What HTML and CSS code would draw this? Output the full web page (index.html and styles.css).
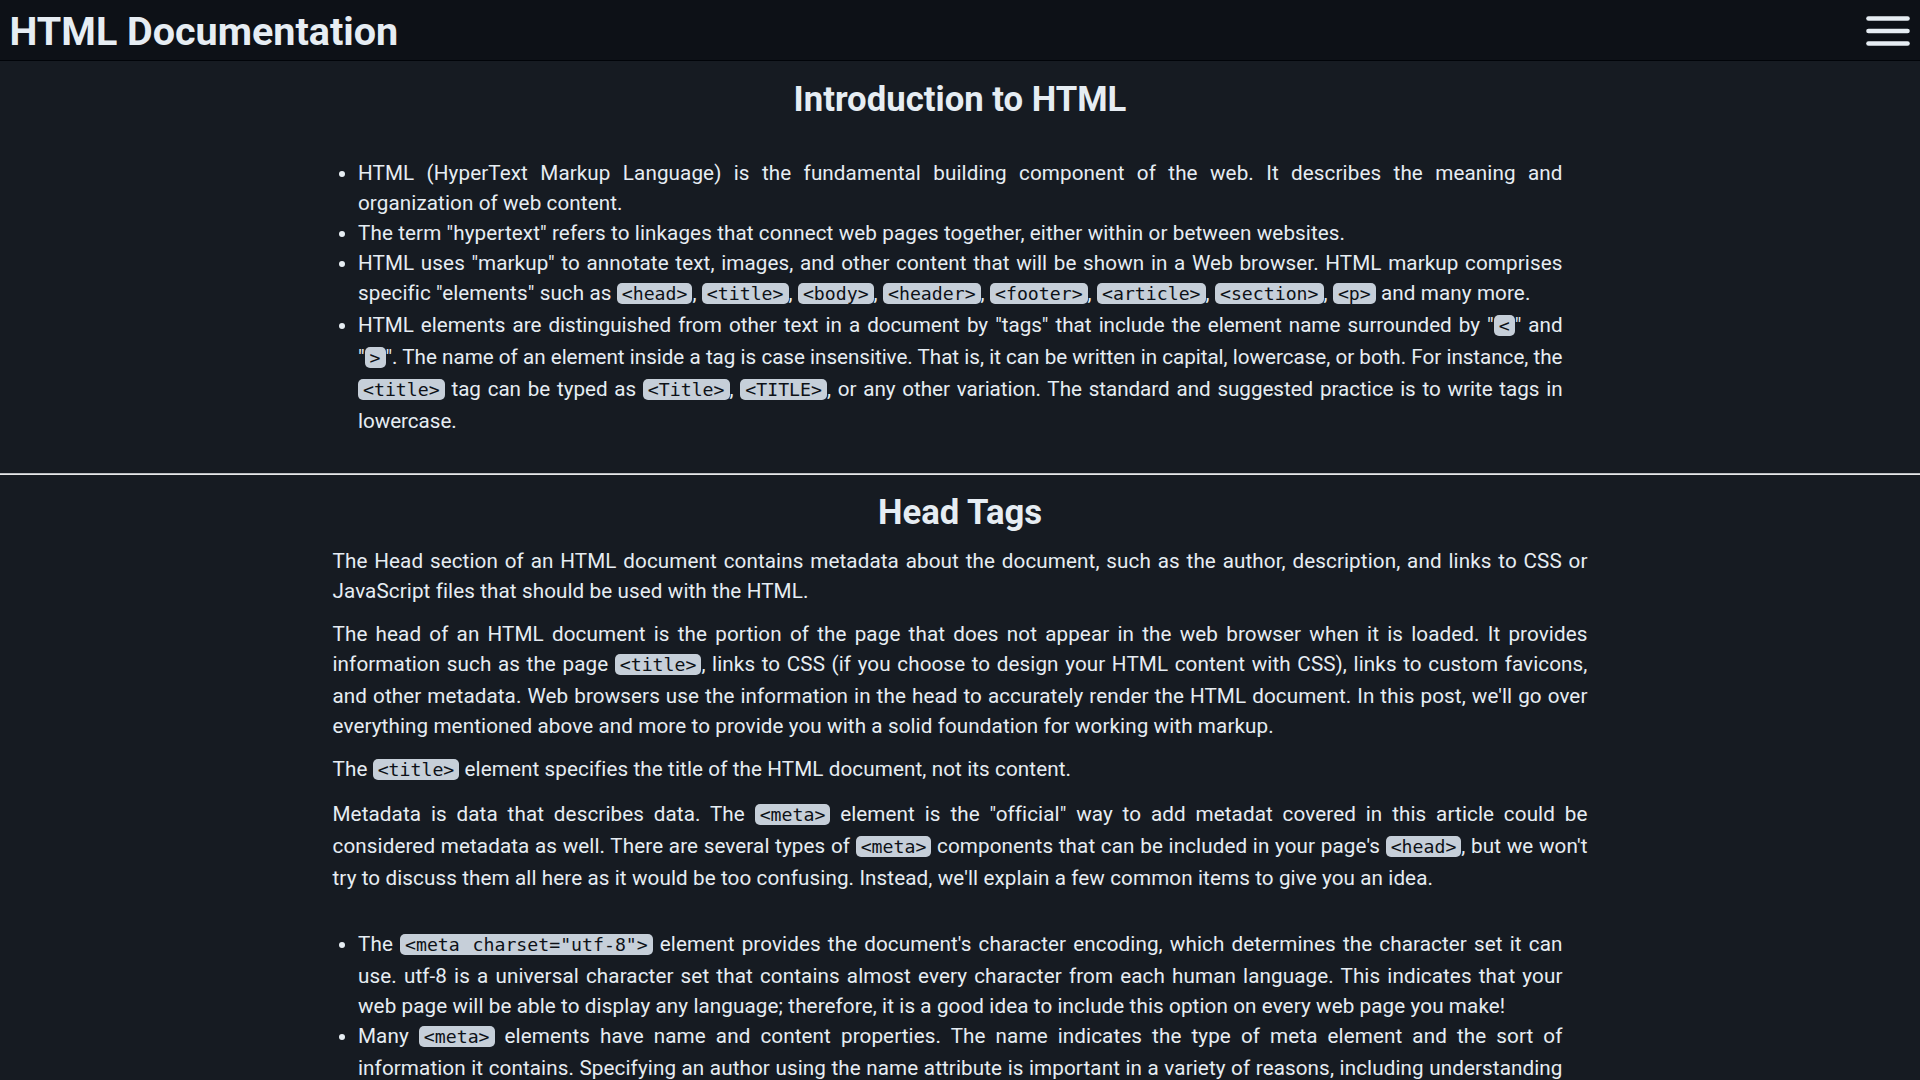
FILE: index.html
```html
<!DOCTYPE html>
<html lang="en">
<head>
<meta charset="utf-8">
<title>HTML Documentation</title>
<link rel="stylesheet" href="styles.css">
</head>
<body>
<header class="topbar">
  <div class="brand">HTML Documentation</div>
  <button class="menu-btn" aria-label="Menu">
    <svg class="menu-icon" width="44" height="30" viewBox="0 0 44 30">
      <line x1="2.5" y1="2.5" x2="41.5" y2="2.5"/>
      <line x1="2.5" y1="15" x2="41.5" y2="15"/>
      <line x1="2.5" y1="27.5" x2="41.5" y2="27.5"/>
    </svg>
  </button>
</header>
<main class="content">
  <section class="doc-section intro">
    <h2 class="section-title">Introduction to HTML</h2>
    <ul class="doc-list">
      <li>HTML (HyperText Markup Language) is the fundamental building component of the web. It describes the meaning and organization of web content.</li>
      <li>The term "hypertext" refers to linkages that connect web pages together, either within or between websites.</li>
      <li>HTML uses "markup" to annotate text, images, and other content that will be shown in a Web browser. HTML markup comprises specific "elements" such as <code>&lt;head&gt;</code>, <code>&lt;title&gt;</code>, <code>&lt;body&gt;</code>, <code>&lt;header&gt;</code>, <code>&lt;footer&gt;</code>, <code>&lt;article&gt;</code>, <code>&lt;section&gt;</code>, <code>&lt;p&gt;</code> and many more.</li>
      <li class="tight">HTML elements are distinguished from other text in a document by "tags" that include the element name surrounded by "<code>&lt;</code>" and "<code>&gt;</code>". The name of an element inside a tag is case insensitive. That is, it can be written in capital, lowercase, or both. For instance, the <code>&lt;title&gt;</code> tag can be typed as <code>&lt;Title&gt;</code>, <code>&lt;TITLE&gt;</code>, or any other variation. The standard and suggested practice is to write tags in lowercase.</li>
    </ul>
  </section>
  <hr class="divider">
  <section class="doc-section head-tags">
    <h2 class="section-title">Head Tags</h2>
    <p>The Head section of an HTML document contains metadata about the document, such as the author, description, and links to CSS or JavaScript files that should be used with the HTML.</p>
    <p>The head of an HTML document is the portion of the page that does not appear in the web browser when it is loaded. It provides information such as the page <code>&lt;title&gt;</code>, links to CSS (if you choose to design your HTML content with CSS), links to custom favicons, and other metadata. Web browsers use the information in the head to accurately render the HTML document. In this post, we'll go over everything mentioned above and more to provide you with a solid foundation for working with markup.</p>
    <p>The <code>&lt;title&gt;</code> element specifies the title of the HTML document, not its content.</p>
    <p>Metadata is data that describes data. The <code>&lt;meta&gt;</code> element is the "official" way to add metadat covered in this article could be considered metadata as well. There are several types of <code>&lt;meta&gt;</code> components that can be included in your page's <code>&lt;head&gt;</code>, but we won't try to discuss them all here as it would be too confusing. Instead, we'll explain a few common items to give you an idea.</p>
    <ul class="doc-list spaced">
      <li>The <code>&lt;meta charset="utf-8"&gt;</code> element provides the document's character encoding, which determines the character set it can use. utf-8 is a universal character set that contains almost every character from each human language. This indicates that your web page will be able to display any language; therefore, it is a good idea to include this option on every web page you make!</li>
      <li>Many <code>&lt;meta&gt;</code> elements have name and content properties. The name indicates the type of meta element and the sort of information it contains. Specifying an author using the name attribute is important in a variety of reasons, including understanding who wrote the page and whom to contact about it.</li>
    </ul>
  </section>
</main>
</body>
</html>
```
FILE: styles.css
```css
html, body {
  margin: 0;
  padding: 0;
}

body {
  background: #161b22;
  color: #e6edf3;
  font-family: Roboto, "Liberation Sans", sans-serif;
  font-size: 20.65px;
  line-height: 30px;
  letter-spacing: 0.1px;
}

.topbar {
  height: 61px;
  box-sizing: border-box;
  background: #0d1117;
  border-bottom: 1px solid #010409;
  padding: 0 10px 0 9.5px;
  display: flex;
  align-items: center;
  justify-content: space-between;
}

.brand {
  font-size: 39.5px;
  font-weight: 700;
  line-height: 57px;
  padding-top: 3px;
  color: #e6edf3;
  letter-spacing: 0;
}

.menu-btn {
  background: none;
  border: 0;
  padding: 0;
  margin: 1px 0 0;
  display: flex;
  cursor: pointer;
}

.menu-icon line {
  stroke: #e6edf3;
  stroke-width: 4.6;
  stroke-linecap: round;
}

.content {
  display: block;
}

.doc-section {
  width: 1255px;
  margin: 0 auto;
}

.intro {
  padding: 17px 0 37px;
}

.head-tags {
  padding: 16px 0 40px;
}

.section-title {
  margin: 0;
  font-size: 34.7px;
  line-height: 42px;
  font-weight: 700;
  text-align: center;
  color: #e6edf3;
  letter-spacing: 0;
}

.intro .section-title {
  margin-bottom: 38px;
}

.head-tags .section-title {
  margin-bottom: 13px;
}

.doc-section p {
  margin: 0 0 13px;
  text-align: justify;
}

.doc-list {
  margin: 0;
  padding: 0 25px 0 25.5px;
  text-align: justify;
}

.doc-list .tight {
  letter-spacing: -0.04px;
}

.doc-list.spaced {
  margin-top: 36px;
}

.divider {
  margin: 0;
  height: 0;
  border: 0;
  border-top: 1px solid #b9bcc0;
  border-bottom: 1px solid #e8e8e8;
}

code {
  font-family: "DejaVu Sans Mono", "Liberation Mono", monospace;
  font-size: 18.2px;
  line-height: 32px;
  letter-spacing: 0;
  background: #c6cfd9;
  color: #0d1117;
  padding: 0 5px;
  border-radius: 5px;
}
```
